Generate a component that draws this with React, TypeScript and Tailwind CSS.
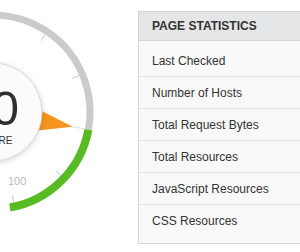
const rows = [
  'Last Checked',
  'Number of Hosts',
  'Total Request Bytes',
  'Total Resources',
  'JavaScript Resources',
  'CSS Resources',
];

// gauge geometry (center sits off the left edge)
const CX = -7;
const CY = 112;
const R = 97;

const pt = (r: number, deg: number) => {
  const a = (deg * Math.PI) / 180;
  return [CX + r * Math.cos(a), CY + r * Math.sin(a)];
};

const arc = (r: number, from: number, to: number) => {
  const [x1, y1] = pt(r, from);
  const [x2, y2] = pt(r, to);
  const large = to - from > 180 ? 1 : 0;
  return `M ${x1} ${y1} A ${r} ${r} 0 ${large} 1 ${x2} ${y2}`;
};

function Gauge() {
  const needle = 10.5;
  const ticks = [-89, -56, -23, 43, 77];
  const [t1x, t1y] = pt(81, needle);
  const [t2x, t2y] = pt(93, needle);
  const tip = pt(81, needle);
  const b1 = pt(44, needle - 15);
  const b2 = pt(44, needle + 15);

  return (
    <svg width="138" height="252" viewBox="0 0 138 252" className="shrink-0">
      <defs>
        <filter id="soft" x="-50%" y="-50%" width="200%" height="200%">
          <feDropShadow dx="0" dy="1" stdDeviation="2.5" floodColor="#000" floodOpacity="0.18" />
        </filter>
      </defs>

      {/* ring */}
      <path d={arc(R, -130, needle)} fill="none" stroke="#cbcbcb" strokeWidth="7" />
      <path d={arc(R, needle, 80)} fill="none" stroke="#58bb24" strokeWidth="8" />

      {/* ticks */}
      {ticks.map((t) => {
        const [x1, y1] = pt(86, t);
        const [x2, y2] = pt(93, t);
        return <line key={t} x1={x1} y1={y1} x2={x2} y2={y2} stroke="#c6c6c6" strokeWidth="1" />;
      })}

      {/* needle */}
      <line x1={t1x} y1={t1y} x2={t2x} y2={t2y} stroke="#c9c9c9" strokeWidth="1" strokeDasharray="2 1" />
      <polygon points={`${b1[0]},${b1[1]} ${tip[0]},${tip[1]} ${b2[0]},${b2[1]}`} fill="#f7941d" />

      {/* score disc */}
      <circle cx={CX} cy={CY} r="49" fill="#fbfbfb" stroke="#d6d6d6" strokeWidth="1" filter="url(#soft)" />
      <text
        x="19"
        y="125"
        textAnchor="end"
        fontFamily="'Liberation Sans', Arial, sans-serif"
        fontSize="49"
        fill="#2f2f2f"
      >
        100
      </text>
      <text
        x="12.5"
        y="144"
        textAnchor="end"
        fontFamily="'Liberation Sans', Arial, sans-serif"
        fontSize="10"
        fill="#333"
      >
        SCORE
      </text>

      <text x="8" y="185" fontFamily="'Liberation Sans', Arial, sans-serif" fontSize="11" fill="#bababa">
        100
      </text>
    </svg>
  );
}

export default function App() {
  return (
    <div className="w-[300px] h-[252px] overflow-hidden bg-white flex font-['Liberation_Sans',Arial,sans-serif]">
      <Gauge />

      {/* Stats table */}
      <div className="mt-[11px] w-[200px] shrink-0 self-start border border-[#d4d4d4] bg-[#f9f9f9]">
        <div className="h-[29px] flex items-center pl-[13px] bg-[#e5e6e7] border-b border-[#d4d4d4]">
          <span className="text-[12px] font-bold text-[#333]">PAGE STATISTICS</span>
        </div>
        <ul className="pt-1 pb-1.5">
          {rows.map((r, i) => (
            <li
              key={r}
              className={`h-8 flex items-center pl-[13px] text-[12px] text-[#333] ${
                i < rows.length - 1 ? 'border-b border-[#e2e2e2]' : ''
              }`}
            >
              {r}
            </li>
          ))}
        </ul>
      </div>
    </div>
  );
}
